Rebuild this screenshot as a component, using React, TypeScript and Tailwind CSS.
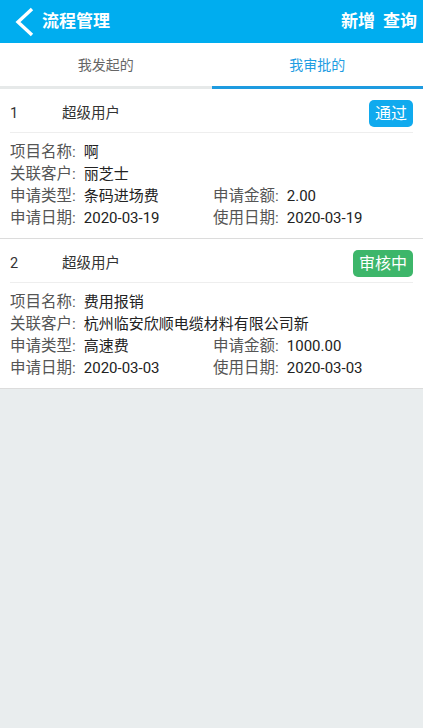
import { useState } from 'react';

interface Item {
  id: number;
  user: string;
  status: 'pass' | 'pending';
  name: string;
  customer: string;
  type: string;
  amount: string;
  applyDate: string;
  useDate: string;
}

const items: Item[] = [
  {
    id: 1,
    user: '超级用户',
    status: 'pass',
    name: '啊',
    customer: '丽芝士',
    type: '条码进场费',
    amount: '2.00',
    applyDate: '2020-03-19',
    useDate: '2020-03-19',
  },
  {
    id: 2,
    user: '超级用户',
    status: 'pending',
    name: '费用报销',
    customer: '杭州临安欣顺电缆材料有限公司新',
    type: '高速费',
    amount: '1000.00',
    applyDate: '2020-03-03',
    useDate: '2020-03-03',
  },
];

function Field({ label, value }: { label: string; value: string }) {
  return (
    <div className="h-[22px] leading-[22px] whitespace-nowrap">
      <span className="text-[#555] text-[15.5px]">{label}:</span>
      <span className="ml-[8px] text-[#222] text-[15px]">{value}</span>
    </div>
  );
}

export default function App() {
  const [tab, setTab] = useState(1);

  return (
    <div className="min-h-[728px] bg-[#e9edee] font-['Roboto','Noto_Sans_CJK_SC',sans-serif]">
      {/* 顶部栏 */}
      <header className="h-[43px] bg-[#00adef] flex items-center pl-[13px] pr-[6px] text-white">
        <svg className="w-[24px] h-[30px]" viewBox="0 0 24 30" fill="none">
          <path d="M19 2L5 15l14 13" stroke="white" strokeWidth={3.4} />
        </svg>
        <span className="ml-[5px] text-[17px] font-bold">流程管理</span>
        <div className="ml-auto flex gap-[8px] text-[17px] font-bold">
          <span>新增</span>
          <span>查询</span>
        </div>
      </header>

      {/* 标签 */}
      <div className="flex bg-white">
        {['我发起的', '我审批的'].map((t, i) => (
          <button
            key={t}
            onClick={() => setTab(i)}
            className={`flex-1 h-[46px] pt-[1px] text-[14px] border-b-[3px] ${
              tab === i ? 'text-[#1e9de2] border-[#1e9be0]' : 'text-[#666] border-[#e6e9e9]'
            }`}
          >
            {t}
          </button>
        ))}
      </div>

      {/* 列表 */}
      <div>
        {items.map((item) => (
          <div key={item.id} className="bg-white border-b border-[#dcdcdc] px-[10px] pt-[11px] pb-[9px]">
            <div className="flex items-center h-[27px] text-[14.5px] text-[#333]">
              <span className="w-[52px]">{item.id}</span>
              <span>{item.user}</span>
              {item.status === 'pass' ? (
                <span className="ml-auto h-[27px] px-[6px] leading-[27px] rounded-[5px] bg-[#10aaee] text-white text-[16px]">
                  通过
                </span>
              ) : (
                <span className="ml-auto h-[27px] px-[6px] leading-[27px] rounded-[5px] bg-[#3db66a] text-white text-[16px]">
                  审核中
                </span>
              )}
            </div>
            <div className="mt-[5px] border-t border-[#eeeeee] pt-[8px]">
              <Field label="项目名称" value={item.name} />
              <Field label="关联客户" value={item.customer} />
              <div className="flex">
                <div className="w-[203px]">
                  <Field label="申请类型" value={item.type} />
                </div>
                <Field label="申请金额" value={item.amount} />
              </div>
              <div className="flex">
                <div className="w-[203px]">
                  <Field label="申请日期" value={item.applyDate} />
                </div>
                <Field label="使用日期" value={item.useDate} />
              </div>
            </div>
          </div>
        ))}
      </div>
    </div>
  );
}
